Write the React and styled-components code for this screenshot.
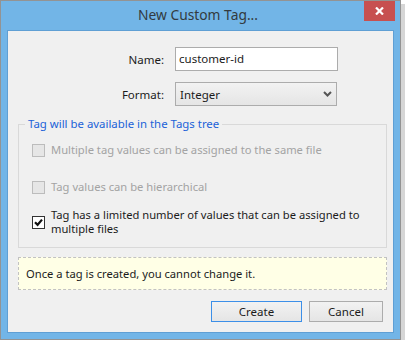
import React from 'react'
import styled, { createGlobalStyle } from 'styled-components'

const GlobalStyle = createGlobalStyle`
    html, body {
        margin: 0;
        padding: 0;
        background: #ffffff;
    }
    body {
        font-family: "Noto Sans", "Open Sans", sans-serif;
        font-size: 11.2px;
        color: #1b1b1b;
    }
`

const Frame = styled.div`
    width: 401px;
    height: 340px;
    box-sizing: border-box;
    border: 1px solid #939393;
    background: #72b5e7;
    box-shadow: 4px 4px 0 #d6d6d6;
    display: flex;
    flex-direction: column;
    padding: 0 6px 6px 6px;
`

const TitleBar = styled.div`
    height: 29px;
    display: grid;
    grid-template-columns: 1fr auto 1fr;
    align-items: start;
    margin: 0 -6px;
    padding-right: 5px;
    .title {
        grid-column: 2;
        font-size: 13.8px;
        line-height: 29px;
        color: #333a40;
        margin-top: -1px;
    }
`

const CloseButton = styled.div`
    grid-column: 3;
    justify-self: end;
    width: 31px;
    height: 20px;
    background: #c75050;
    display: flex;
    align-items: center;
    justify-content: center;
`

const Client = styled.div`
    flex: 1;
    background: #f0f0f0;
    border: 1px solid #5f9fd4;
    display: flex;
    flex-direction: column;
    padding: 16px 6px 0 10px;
`

const FieldRow = styled.div`
    display: grid;
    grid-template-columns: 146px 1fr;
    column-gap: 11px;
    align-items: center;
    margin-bottom: ${p => p.gap || 0}px;
    label {
        text-align: right;
        font-size: 11.5px;
    }
`

const TextInput = styled.div`
    width: 163px;
    height: 24px;
    box-sizing: border-box;
    border: 1px solid #acacac;
    background: #ffffff;
    padding: 0 3px;
    line-height: 22px;
    font-size: 11.5px;
`

const Select = styled.div`
    width: 162px;
    height: 24px;
    box-sizing: border-box;
    border: 1px solid #acacac;
    background: linear-gradient(#f2f2f2, #e5e5e5);
    padding: 0 4px 0 4px;
    display: flex;
    align-items: center;
    justify-content: space-between;
    font-size: 11.5px;
`

const GroupBox = styled.div`
    position: relative;
    margin-top: 18px;
    border: 1px solid #d9d9d9;
    padding: 18px 8px 11px 13px;
    display: flex;
    flex-direction: column;
`

const Legend = styled.div`
    position: absolute;
    top: -9px;
    left: 6px;
    padding: 0 3px;
    background: #f0f0f0;
    color: #2162d8;
    font-size: 11.4px;
    line-height: 16px;
`

const CheckRow = styled.div`
    display: flex;
    align-items: center;
    gap: 6px;
    margin-bottom: ${p => p.gap || 0}px;
    color: ${p => (p.disabled ? '#a3a3a3' : '#1b1b1b')};
    line-height: 14px;
    span {
        max-width: 320px;
    }
`

const Box = styled.div`
    flex: none;
    width: 13px;
    height: 13px;
    box-sizing: border-box;
    border: 1px solid ${p => (p.disabled ? '#bcbcbc' : '#333333')};
    background: ${p => (p.disabled ? '#e6e6e6' : '#ffffff')};
    display: flex;
    align-items: center;
    justify-content: center;
`

const Notice = styled.div`
    margin-top: 9px;
    height: 33px;
    box-sizing: border-box;
    border: 1px dashed #c2c2c2;
    background: #ffffe6;
    padding: 0 7px;
    display: flex;
    align-items: center;
`

const Buttons = styled.div`
    margin-top: 11px;
    display: flex;
    justify-content: flex-end;
    gap: 7px;
    padding-right: 4px;
`

const Button = styled.div`
    width: ${p => p.w}px;
    height: 21px;
    box-sizing: border-box;
    border: 1px solid ${p => (p.primary ? '#3c8fe8' : '#acacac')};
    background: linear-gradient(#f2f2f2, #e5e5e5);
    display: flex;
    align-items: center;
    justify-content: center;
    font-size: 11.5px;
`

function Check() {
    return (
        <svg width="9" height="9" viewBox="0 0 9 9">
            <path d="M1 4.2 L3.6 6.8 L8 1.6" fill="none" stroke="#111" strokeWidth="2.2" />
        </svg>
    )
}

function App() {
    return (
        <>
            <GlobalStyle />
            <Frame>
                <TitleBar>
                    <div className="title">New Custom Tag...</div>
                    <CloseButton>
                        <svg width="9" height="8" viewBox="0 0 9 8">
                            <path d="M1 0.5 L8 7.5 M8 0.5 L1 7.5" stroke="#fff" strokeWidth="2.2" />
                        </svg>
                    </CloseButton>
                </TitleBar>
                <Client>
                    <FieldRow gap={11}>
                        <label>Name:</label>
                        <TextInput>customer-id</TextInput>
                    </FieldRow>
                    <FieldRow>
                        <label>Format:</label>
                        <Select>
                            <span>Integer</span>
                            <svg width="9" height="6" viewBox="0 0 9 6">
                                <path d="M1 1 L4.5 4.5 L8 1" fill="none" stroke="#555" strokeWidth="2" />
                            </svg>
                        </Select>
                    </FieldRow>
                    <GroupBox>
                        <Legend>Tag will be available in the Tags tree</Legend>
                        <CheckRow disabled gap={23}>
                            <Box disabled />
                            <span>Multiple tag values can be assigned to the same file</span>
                        </CheckRow>
                        <CheckRow disabled gap={14}>
                            <Box disabled />
                            <span>Tag values can be hierarchical</span>
                        </CheckRow>
                        <CheckRow>
                            <Box><Check /></Box>
                            <span>Tag has a limited number of values that can be assigned to multiple files</span>
                        </CheckRow>
                    </GroupBox>
                    <Notice>Once a tag is created, you cannot change it.</Notice>
                    <Buttons>
                        <Button primary w={91}>Create</Button>
                        <Button w={74}>Cancel</Button>
                    </Buttons>
                </Client>
            </Frame>
        </>
    )
}

export default App
